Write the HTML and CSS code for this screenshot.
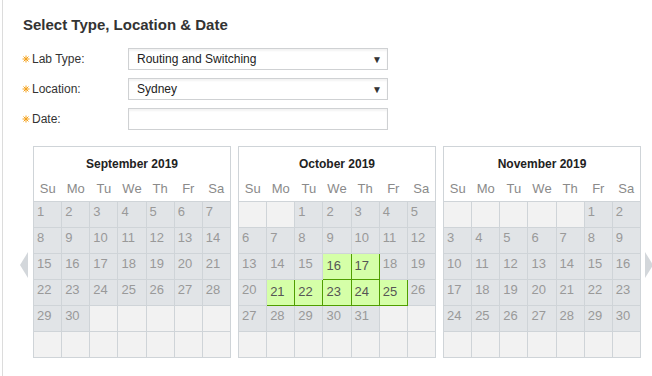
FILE: index.html
```html
<!DOCTYPE html>
<html lang="en">
<head>
  <meta charset="UTF-8">
  <title>Lab Booking</title>
  <link rel="stylesheet" href="styles.css">
</head>
<body>

  <div class="page">
    <h2>Select Type, Location &amp; Date</h2>

    <!-- Campos do formulário -->
    <div class="form-row">
      <label><span class="req"><svg viewBox="0 0 8 8" width="8" height="8"><path d="M4 0.5V7.5M0.5 4H7.5M1.5 1.5L6.5 6.5M6.5 1.5L1.5 6.5" stroke="#f4a11b" stroke-width="1"/></svg></span>Lab Type:</label>
      <div class="select"><span>Routing and Switching</span><span class="arrow">&#9660;</span></div>
    </div>
    <div class="form-row">
      <label><span class="req"><svg viewBox="0 0 8 8" width="8" height="8"><path d="M4 0.5V7.5M0.5 4H7.5M1.5 1.5L6.5 6.5M6.5 1.5L1.5 6.5" stroke="#f4a11b" stroke-width="1"/></svg></span>Location:</label>
      <div class="select"><span>Sydney</span><span class="arrow">&#9660;</span></div>
    </div>
    <div class="form-row">
      <label><span class="req"><svg viewBox="0 0 8 8" width="8" height="8"><path d="M4 0.5V7.5M0.5 4H7.5M1.5 1.5L6.5 6.5M6.5 1.5L1.5 6.5" stroke="#f4a11b" stroke-width="1"/></svg></span>Date:</label>
      <input type="text" class="date-input">
    </div>

    <!-- Calendários -->
    <div class="calendars">
      <span class="nav prev"></span>
      <div id="meses" class="months"></div>
      <span class="nav next"></span>
    </div>
  </div>

  <script>
    const nomesMeses = ["January","February","March","April","May","June","July","August","September","October","November","December"];
    const diasSemana = ["Su","Mo","Tu","We","Th","Fr","Sa"];
    const selecionados = { 9: [16, 17, 21, 22, 23, 24, 25] };

    function criarMes(ano, mes) {
      const primeiro = new Date(ano, mes, 1).getDay();
      const total = new Date(ano, mes + 1, 0).getDate();
      const escolhidos = selecionados[mes] || [];
      let html = `<table class="cal"><thead>
        <tr><th colspan="7" class="title">${nomesMeses[mes]} ${ano}</th></tr>
        <tr>${diasSemana.map(d => `<th class="dow">${d}</th>`).join("")}</tr>
      </thead><tbody>`;
      let dia = 1 - primeiro;
      for (let r = 0; r < 6; r++) {
        html += "<tr>";
        for (let c = 0; c < 7; c++, dia++) {
          if (dia < 1 || dia > total) {
            html += `<td class="empty"></td>`;
          } else {
            const cls = escolhidos.includes(dia) ? "day sel" : "day";
            html += `<td class="${cls}">${dia}</td>`;
          }
        }
        html += "</tr>";
      }
      html += "</tbody></table>";
      return html;
    }

    document.getElementById("meses").innerHTML =
      criarMes(2019, 8) + criarMes(2019, 9) + criarMes(2019, 10);
  </script>

</body>
</html>
```

FILE: styles.css
```css
body {
  margin: 0;
  font-family: "Liberation Sans", Arial, sans-serif;
  color: #333;
}

.page {
  margin-left: 2px;
  border-left: 1px solid #dcdcdc;
  padding: 15px 0 0 19px;
  min-height: calc(100vh - 15px);
}

h2 {
  margin: 0 0 13px 1px;
  font-size: 15px;
  line-height: 20px;
  color: #333;
}

/* Linhas do formulário */
.form-row {
  display: flex;
  align-items: center;
  margin-bottom: 8px;
}

.form-row label {
  width: 106px;
  font-size: 12px;
  display: flex;
  align-items: center;
}

.req {
  display: inline-flex;
  width: 10px;
}

.select, .date-input {
  box-sizing: border-box;
  width: 260px;
  height: 22px;
  border: 1px solid #cfd1d3;
  background: #fff;
  box-shadow: inset 0 2px 2px rgba(0,0,0,0.05);
  font-family: inherit;
  font-size: 12px;
  color: #222;
}

.select {
  display: flex;
  align-items: center;
  justify-content: space-between;
  padding: 0 5px 0 8px;
}

.select .arrow {
  font-size: 10px;
  color: #333;
}

.date-input {
  padding: 0 8px;
  margin: 0;
}

/* Calendários */
.calendars {
  display: flex;
  align-items: flex-start;
  margin: 16px 0 0 -2px;
}

.nav {
  width: 0;
  height: 0;
  margin-top: 106px;
  border-top: 13px solid transparent;
  border-bottom: 13px solid transparent;
}

.nav.prev {
  border-right: 8px solid #d3d7db;
  margin-right: 5px;
}

.nav.next {
  border-left: 8px solid #d3d7db;
  margin-left: 4px;
}

.months {
  display: flex;
  gap: 7px;
}

.cal {
  width: 198px;
  border-collapse: collapse;
  table-layout: fixed;
  border: 1px solid #cfd4d8;
  background: #fff;
  font-size: 13px;
}

.cal .title {
  height: 30px;
  padding: 4px 0 0;
  box-sizing: border-box;
  font-size: 12px;
  font-weight: bold;
  color: #222;
  vertical-align: middle;
}

.cal .dow {
  height: 24px;
  padding: 0;
  font-weight: normal;
  color: #8a8a8a;
  vertical-align: middle;
}

.cal td {
  height: 26px;
  padding: 2px 0 0 3px;
  border: 1px solid #cfd4d8;
  vertical-align: top;
  box-sizing: border-box;
  color: #999;
}

.cal td.day {
  background: #e1e4e7;
}

.cal td.empty {
  background: #f2f2f2;
}

.cal td.sel {
  background: #d5ffa8;
  border: 1px solid #4f9e00;
  color: #555;
  padding-top: 4px;
}
```
